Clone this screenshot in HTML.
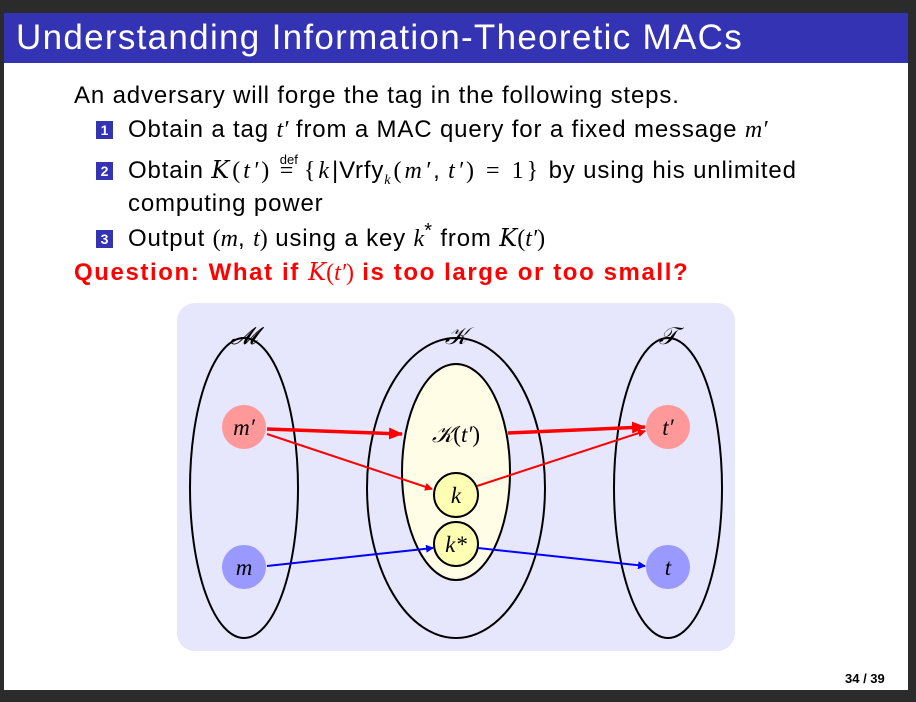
<!DOCTYPE html>
<html><head><meta charset="utf-8"><style>
html,body{margin:0;padding:0;}
body{width:916px;height:702px;background:#2b2b2b;position:relative;overflow:hidden;font-family:"Liberation Sans",sans-serif;}
.page{position:absolute;left:4px;top:13px;width:904px;height:677px;background:#fff;}
.title{position:absolute;left:0;top:0;width:904px;height:50px;background:#3333b3;color:#fff;font-size:35px;line-height:50px;letter-spacing:1.3px;}
.title span{position:absolute;left:12px;top:0px;}
.t{position:absolute;font-size:24px;line-height:28px;height:28px;color:#000;white-space:nowrap;letter-spacing:0.85px;}
.m{font-family:"Liberation Serif",serif;font-style:italic;letter-spacing:0;}
.r{font-family:"Liberation Serif",serif;letter-spacing:0;}
.n{display:inline-block;width:17px;height:18px;background:#3333b3;color:#fff;font-size:14px;line-height:18px;text-align:center;font-weight:bold;vertical-align:2px;margin-right:15px;letter-spacing:0;}
.cal{font-family:"DejaVu Serif",serif;font-style:italic;letter-spacing:0;}
.red{color:#f00;font-weight:bold;}
.foot{position:absolute;left:841px;top:658px;font-size:13px;font-weight:bold;}
sup,sub{line-height:0;}
.w .m,.w .r,.w .cal{letter-spacing:3px;}
</style></head><body>
<div class="page">
<div class="title"><span>Understanding Information-Theoretic MACs</span></div>
<div class="t" style="left:70px;top:69px">An adversary will forge the tag in the following steps.</div>
<div class="t" style="left:92px;top:103px"><span class="n">1</span>Obtain a tag <span class="m">t′</span> from a MAC query for a fixed message <span class="m">m′</span></div>
<div class="t w" style="left:92px;top:143px"><span class="n">2</span>Obtain <span class="cal">K</span><span class="r">(</span><span class="m">t′</span><span class="r">)</span> <span class="r" style="position:relative"><span style="position:absolute;font-family:'Liberation Sans';font-size:13px;left:0px;top:-12px;letter-spacing:0">def</span>=</span> <span class="r">{</span><span class="m">k</span>|Vrfy<sub class="m" style="font-size:14px">k</sub><span class="r">(</span><span class="m">m′</span>, <span class="m">t′</span><span class="r">) = 1}</span> by using his unlimited</div>
<div class="t" style="left:124px;top:177px">computing power</div>
<div class="t" style="left:92px;top:211px"><span class="n">3</span>Output <span class="r">(</span><span class="m">m</span>, <span class="m">t</span><span class="r">)</span> using a key <span class="m">k</span><sup>*</sup> from <span class="cal">K</span><span class="r">(</span><span class="m">t′</span><span class="r">)</span></div>
<div class="t red" style="left:70px;top:245px;letter-spacing:1.6px">Question: What if <span class="cal" style="font-weight:normal">K</span><span class="r" style="font-weight:normal">(</span><span class="m" style="font-weight:normal">t′</span><span class="r" style="font-weight:normal">)</span> is too large or too small?</div>
<div class="foot">34 / 39</div>
</div>
<svg width="916" height="702" style="position:absolute;left:0;top:0" font-family="Liberation Serif,serif" font-style="italic">
<defs>
<marker id="ar" markerWidth="8" markerHeight="8" refX="7" refY="4" orient="auto" markerUnits="userSpaceOnUse" viewBox="0 0 8 8"><path d="M0,0L8,4L0,8z" fill="#f00"/></marker>
<marker id="ab" markerWidth="8" markerHeight="8" refX="7" refY="4" orient="auto" markerUnits="userSpaceOnUse" viewBox="0 0 8 8"><path d="M0,0L8,4L0,8z" fill="#00f"/></marker>
<marker id="ar2" markerWidth="14" markerHeight="12" refX="13" refY="6" orient="auto" markerUnits="userSpaceOnUse" viewBox="0 0 14 12"><path d="M0,0L14,6L0,12z" fill="#f00"/></marker>
</defs>
<rect x="177" y="303" width="558" height="348" rx="18" fill="#e6e6fc"/>
<ellipse cx="244" cy="488" rx="54" ry="150" fill="none" stroke="#000" stroke-width="2"/>
<ellipse cx="456" cy="488" rx="89" ry="150" fill="none" stroke="#000" stroke-width="2"/>
<ellipse cx="456" cy="472" rx="54" ry="108" fill="#fffde6" stroke="#000" stroke-width="2"/>
<ellipse cx="668" cy="488" rx="54" ry="150" fill="none" stroke="#000" stroke-width="2"/>
<text x="244" y="344" font-size="24" text-anchor="middle" font-family="DejaVu Serif,serif">𝓜</text>
<text x="456" y="344" font-size="24" text-anchor="middle" font-family="DejaVu Serif,serif">𝒦</text>
<text x="668" y="344" font-size="24" text-anchor="middle" font-family="DejaVu Serif,serif">𝒯</text>
<circle cx="244" cy="427" r="22" fill="#ff9999"/>
<circle cx="244" cy="567" r="22" fill="#9999ff"/>
<circle cx="668" cy="427" r="22" fill="#ff9999"/>
<circle cx="668" cy="567" r="22" fill="#9999ff"/>
<text x="244" y="435" font-size="23" text-anchor="middle">m′</text>
<text x="244" y="575" font-size="23" text-anchor="middle">m</text>
<text x="668" y="435" font-size="23" text-anchor="middle">t′</text>
<text x="668" y="575" font-size="23" text-anchor="middle">t</text>
<text x="456" y="442" font-size="23" text-anchor="middle"><tspan font-family="DejaVu Serif,serif">𝒦</tspan><tspan font-style="normal">(</tspan>t′<tspan font-style="normal">)</tspan></text>
<circle cx="456" cy="495" r="22" fill="#ffffb3" stroke="#000" stroke-width="2"/>
<circle cx="456" cy="544" r="22" fill="#ffffb3" stroke="#000" stroke-width="2"/>
<text x="456" y="503" font-size="23" text-anchor="middle">k</text>
<text x="456" y="552" font-size="23" text-anchor="middle">k*</text>
<line x1="267" y1="429" x2="402" y2="434" stroke="#f00" stroke-width="3.5" marker-end="url(#ar2)"/>
<line x1="267" y1="434" x2="432" y2="489" stroke="#f00" stroke-width="2" marker-end="url(#ar)"/>
<line x1="508" y1="433" x2="645" y2="427" stroke="#f00" stroke-width="3.5" marker-end="url(#ar2)"/>
<line x1="477" y1="486" x2="645" y2="431" stroke="#f00" stroke-width="2" marker-end="url(#ar)"/>
<line x1="267" y1="566" x2="433" y2="548" stroke="#00f" stroke-width="2" marker-end="url(#ab)"/>
<line x1="478" y1="548" x2="645" y2="566" stroke="#00f" stroke-width="2" marker-end="url(#ab)"/>
</svg>
</body></html>
